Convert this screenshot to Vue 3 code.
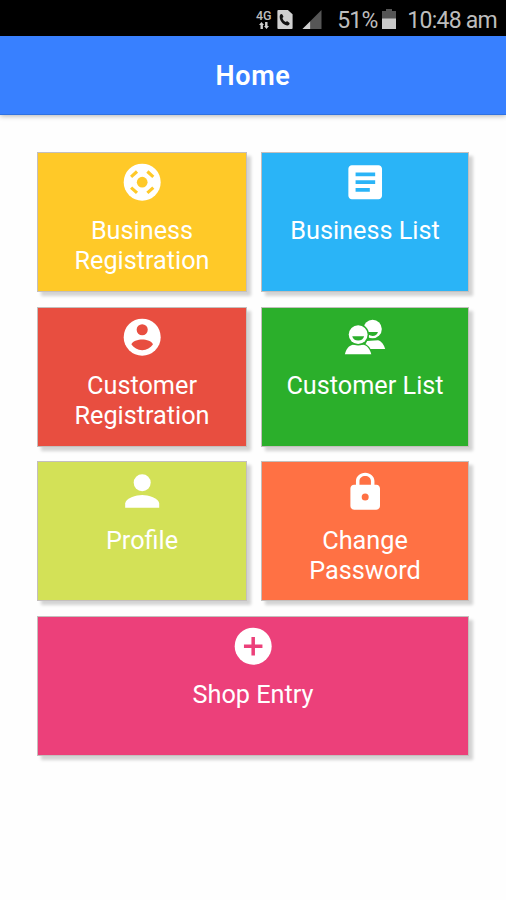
<script setup>
const cards = [
  { label: ['Business', 'Registration'], color: '#ffc928', icon: 'reel' },
  { label: ['Business List'], color: '#2ab4f7', icon: 'list' },
  { label: ['Customer', 'Registration'], color: '#e84e40', icon: 'account' },
  { label: ['Customer List'], color: '#2baf2b', icon: 'people' },
  { label: ['Profile'], color: '#d3e157', icon: 'person' },
  { label: ['Change', 'Password'], color: '#ff7144', icon: 'lock' },
  { label: ['Shop Entry'], color: '#ec407a', icon: 'add', wide: true },
]
</script>

<template>
  <div class="screen">
    <div class="status">
      <div class="network">
        <span class="gen">4G</span>
        <svg class="arrows" viewBox="0 0 12 7"><path d="M2.500 7V3H1l2.500-3L6 3H4.900v4zM7.100 0h2.400v4H11L8.500 7 6 4h1.100z" /></svg>
      </div>
      <svg class="sim" viewBox="0 0 16 20">
        <path d="M1 0h10l5 4.500v14.500a1 1 0 0 1-1 1H1a1 1 0 0 1-1-1V1a1 1 0 0 1 1-1z" fill="#d0d0d0" />
        <path d="M2.700 5.300c.8-1.300 2-1.500 2.500-.6l1 2c.3.700-.2 1.200-.9 1.700.5 2 1.700 3.400 3.500 4.300.7-.8 1.400-1 2-.5l1.700 1.300c.8.8.2 2-1 2.500-4.700 1.500-10.500-5.500-8.800-10.700z" fill="#111" />
      </svg>
      <svg class="signal" viewBox="0 0 20 20">
        <path d="M20 0v20H0z" fill="#565656" />
        <path d="M8 12v8H0z" fill="#d0d0d0" />
      </svg>
      <span class="percent">51%</span>
      <svg class="battery" viewBox="0 0 14 20">
        <path d="M4 0h6v2h4v8H0V2h4z" fill="#555" />
        <path d="M0 9.500h14V20H0z" fill="#c9c9c9" />
      </svg>
      <span class="time">10:48 am</span>
    </div>
    <header class="bar"><h1>Home</h1></header>
    <main class="grid">
      <button v-for="c in cards" :key="c.icon" class="card" :class="{ wide: c.wide }" :style="{ backgroundColor: c.color }">
        <svg class="icon" viewBox="0 0 24 24" :style="{ color: c.color }">
          <template v-if="c.icon === 'reel'">
            <circle cx="12" cy="12" r="10" fill="#fff" />
            <circle cx="12" cy="12" r="2.900" fill="currentColor" />
            <g stroke="currentColor" stroke-width="1.700">
              <path d="M6 9.100L9.200 6.200M14.800 6.200l3.200 2.900M6 14.900l3.200 2.900M14.800 17.800l3.200-2.900" />
            </g>
          </template>
          <path v-else-if="c.icon === 'list'" fill="#fff" d="M19.200 2.800H4.800c-1 0-1.900.9-1.900 1.900v14.600c0 1 .9 1.900 1.900 1.900h14.400c1 0 1.900-.9 1.900-1.900V4.700c0-1-.9-1.900-1.900-1.900zm-4.700 14.300H6.800v-2h7.700v2zm2.900-4.100H6.800v-2h10.600v2zm0-4.200H6.800v-2h10.600v2z" />
          <template v-else-if="c.icon === 'account'">
            <circle cx="12" cy="12" r="10" fill="#fff" />
            <circle cx="12" cy="8" r="3" fill="currentColor" />
            <path fill="currentColor" d="M6.200 16c.03-1.900 3.800-2.800 5.800-2.800s5.770.9 5.800 2.800c-1.290 1.900-3.300 3-5.800 3s-4.500-1.100-5.800-3z" />
          </template>
          <template v-else-if="c.icon === 'people'">
            <path fill="#fff" d="M11 18.400l2-4.400 6-.4c2 .6 3.100 2.400 3.800 4.800z" />
            <circle cx="16" cy="7.600" r="5" fill="#fff" />
            <path fill="currentColor" d="M12.500 9.200h6.400c-.4 1.500-1.500 2.100-2.900 2.100s-3-.8-3.500-2.100z" />
            <path fill="#fff" stroke="currentColor" stroke-width="1.400" paint-order="stroke" d="M1 21.200c.7-2.600 2-4.600 4.300-5.100h5.800c2.300.6 3.500 2.700 4.200 5.100z" />
            <circle cx="8.200" cy="10.600" r="5.900" fill="currentColor" />
            <circle cx="8.200" cy="10.600" r="5.100" fill="#fff" />
            <path fill="currentColor" d="M5 11.500h6.400c-.3 1.500-1.500 2.300-3.200 2.300S5.300 13 5 11.500z" />
          </template>
          <template v-else-if="c.icon === 'person'">
            <circle cx="12" cy="7.400" r="4.600" fill="#fff" />
            <path fill="#fff" d="M2.800 21v-2.300c0-3.100 6.100-4.700 9.200-4.700s9.200 1.600 9.200 4.700V21z" />
          </template>
          <path v-else-if="c.icon === 'lock'" fill="#fff" fill-rule="evenodd" d="M18 8.500h-1v-2C17 4 14.760 2 12 2S7 4 7 6.500v2H6c-1.100 0-2 .9-2 2V20c0 1.100.9 2 2 2h12c1.100 0 2-.9 2-2v-9.500c0-1.100-.9-2-2-2zm-6 8.500a1.900 1.900 0 1 1 0-3.800 1.900 1.900 0 0 1 0 3.800zM15.100 8.500H8.900v-2c0-1.600 1.390-2.700 3.100-2.700s3.100 1.100 3.100 2.700z" />
          <template v-else>
            <circle cx="12" cy="12" r="10" fill="#fff" />
            <path d="M12 7v10M7 12h10" stroke="currentColor" stroke-width="1.900" />
          </template>
        </svg>
        <span class="label"><span v-for="line in c.label" :key="line" class="line">{{ line }}</span></span>
      </button>
    </main>
  </div>
</template>

<style>
body { background: #fff; }
</style>
<style scoped>
.screen {
  width: 506px;
  height: 900px;
  overflow: hidden;
  background: #fefefe;
  font-family: Roboto, sans-serif;
}
.status {
  box-sizing: border-box;
  height: 36px;
  padding: 3px 9px 0 0;
  display: flex;
  align-items: center;
  justify-content: flex-end;
  background: #000;
  color: #bdbdbd;
  font-size: 23px;
  white-space: nowrap;
}
.network { width: 17px; display: flex; flex-direction: column; align-items: center; gap: 1px; }
.gen { font-size: 12.500px; line-height: 11px; font-weight: 500; }
.arrows { width: 12px; height: 7px; fill: #d0d0d0; }
.sim { width: 16px; height: 19px; margin-left: 5px; }
.signal { width: 20px; height: 19px; margin-left: 9px; }
.percent { margin: 2px 0 0 15px; letter-spacing: -.9px; }
.battery { width: 14px; height: 20px; margin: -1px 0 0 5px; }
.time { margin: 2px 0 0 11px; letter-spacing: -.75px; }
.bar {
  height: 78px;
  display: flex;
  align-items: center;
  justify-content: center;
  background: #3880ff;
  border-bottom: 1px solid #2f72e2;
  box-shadow: 0 1px 5px rgba(0, 0, 0, .3);
}
h1 { margin: 1px 0 0; color: #fff; font-size: 27px; font-weight: 600; letter-spacing: .6px; }
.grid {
  padding: 37px 37px 0 37px;
  display: grid;
  grid-template-columns: 210px 208px;
  column-gap: 14px;
  row-gap: 14.700px;
}
.card {
  box-sizing: border-box;
  height: 140px;
  margin: 0;
  padding: 7px 0 0;
  display: flex;
  flex-direction: column;
  align-items: center;
  border: 1px solid #c4bfbd;
  box-shadow: 4px 4px 3px #d3d3d3;
  color: #fff;
  font: 400 25.250px/30px Roboto, sans-serif;
}
.wide { grid-column: span 2; }
.icon { width: 44.400px; height: 44.400px; flex: none; }
.label { margin-top: 12px; display: flex; flex-direction: column; }
.line { white-space: nowrap; text-align: center; }
</style>
